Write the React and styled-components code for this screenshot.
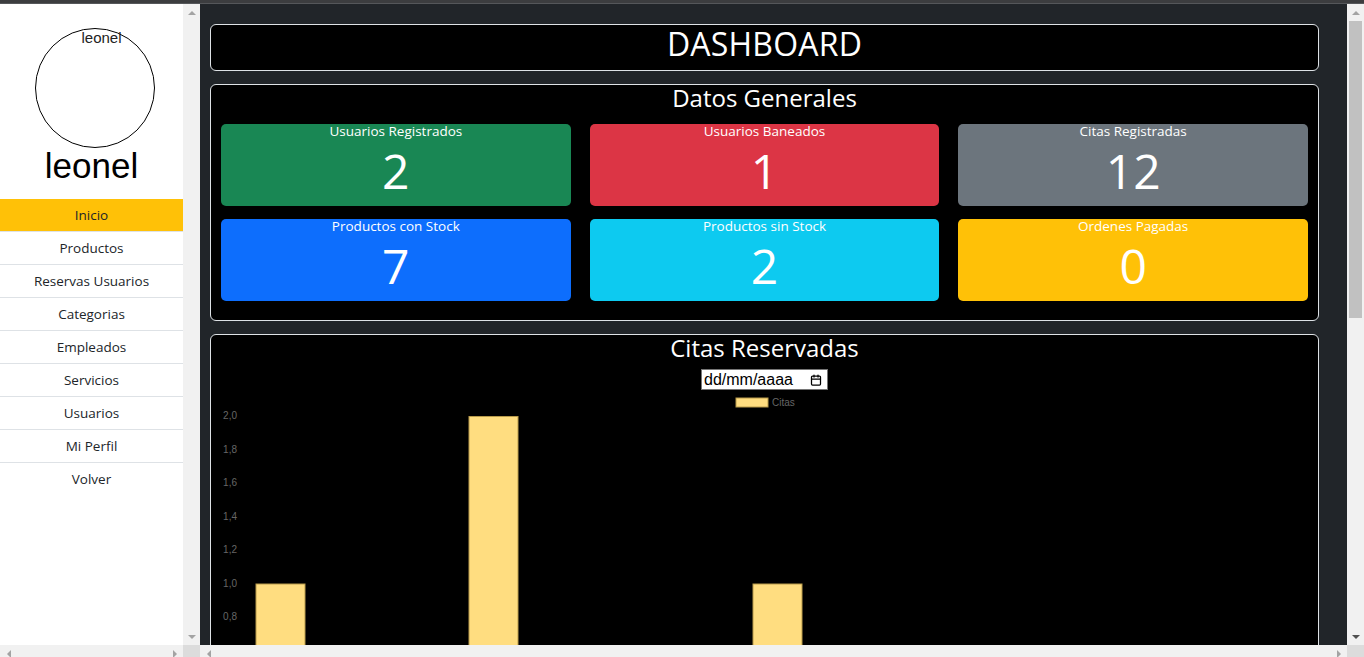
import React from 'react';
import styled, { createGlobalStyle } from 'styled-components';
import { Calendar } from 'lucide-react';

const GlobalStyle = createGlobalStyle`
  * { box-sizing: border-box; }
  html, body { margin: 0; padding: 0; height: 100%; overflow: hidden; }
  body {
    font-family: "Open Sans", "Noto Sans", sans-serif;
    background: #212529;
    color: #212529;
  }
`;

/* ---------- scrollbars (drawn, the page itself does not scroll) ---------- */

const VBar = styled.div`
  width: 17px;
  flex-shrink: 0;
  display: flex;
  flex-direction: column;
  background: #f1f1f1;
`;

const HBar = styled.div`
  flex: 1;
  height: 17px;
  display: flex;
  background: #f1f1f1;
`;

const Track = styled.div`
  flex: 1;
  display: flex;
  flex-direction: column;
`;

const Thumb = styled.div`
  height: ${(p) => p.$size}px;
  margin: 0 2px;
  background: #c1c1c1;
`;

const Corner = styled.div`
  width: 17px;
  height: 17px;
  flex-shrink: 0;
  background: #dcdcdc;
`;

const triangles = {
  up: (c) => `border-width: 0 4px 4px 4px; border-color: transparent transparent ${c} transparent;`,
  down: (c) => `border-width: 4px 4px 0 4px; border-color: ${c} transparent transparent transparent;`,
  left: (c) => `border-width: 4px 4px 4px 0; border-color: transparent ${c} transparent transparent;`,
  right: (c) => `border-width: 4px 0 4px 4px; border-color: transparent transparent transparent ${c};`,
};

const ArrowBtn = styled.div`
  width: 17px;
  height: 17px;
  flex-shrink: 0;
  display: flex;
  align-items: center;
  justify-content: center;
  &::before {
    content: '';
    width: 0;
    height: 0;
    border-style: solid;
    ${(p) => triangles[p.$dir](p.$on ? '#505050' : '#a3a3a3')}
  }
`;

const VScroll = ({ thumb, downOn }) => (
  <VBar>
    <ArrowBtn $dir="up" />
    <Track>{thumb ? <Thumb $size={thumb} /> : null}</Track>
    <ArrowBtn $dir="down" $on={downOn} />
  </VBar>
);

const HScroll = () => (
  <>
    <HBar>
      <ArrowBtn $dir="left" />
      <Track />
      <ArrowBtn $dir="right" />
    </HBar>
    <Corner />
  </>
);

/* ---------- layout ---------- */

const TopStrip = styled.div`
  height: 4px;
  background: #3c3d3f;
  border-bottom: 1px solid #55575a;
`;

const Layout = styled.div`
  display: flex;
  height: 658px;
`;

const Pane = styled.div`
  display: flex;
  flex-direction: column;
  width: ${(p) => p.$w || 'auto'};
  flex: ${(p) => (p.$w ? '0 0 auto' : '1')};
  min-width: 0;
`;

const PaneBody = styled.div`
  flex: 1;
  display: flex;
  min-height: 0;
`;

const PaneFoot = styled.div`
  display: flex;
  height: 17px;
`;

const Sidebar = styled.aside`
  flex: 1;
  background: #fff;
  overflow: hidden;
`;

const Profile = styled.div`
  padding-top: 24px;
`;

const Avatar = styled.div`
  width: 120px;
  height: 120px;
  margin-left: 35px;
  border: 1px solid #000;
  border-radius: 50%;
  padding-left: 13px;
  text-align: center;
  font-family: "Liberation Sans", Arial, sans-serif;
  font-size: 15px;
  line-height: 17px;
  color: #222;
`;

const UserName = styled.h1`
  margin: 0 0 15px;
  text-align: center;
  font-family: "Liberation Sans", Arial, sans-serif;
  font-weight: 400;
  font-size: 35px;
  line-height: 36px;
  color: #000;
`;

const Nav = styled.nav`
  display: flex;
  flex-direction: column;
`;

const NavItem = styled.a`
  display: block;
  height: 33px;
  line-height: 32px;
  text-align: center;
  font-size: 13.5px;
  color: #212529;
  text-decoration: none;
  border-bottom: 1px solid #dee2e6;
  background: ${(p) => (p.$active ? '#ffc107' : '#fff')};
  &:last-child { border-bottom: none; }
`;

const Main = styled.main`
  flex: 1;
  min-width: 0;
  overflow: hidden;
  background: #212529;
  padding: 20px 28px 0 10px;
`;

const Panel = styled.section`
  background: #000;
  border: 1px solid #dee2e6;
  border-radius: 6px;
  color: #fff;
  margin-bottom: 13px;
  padding: ${(p) => p.$pad || '0'};
  min-height: ${(p) => p.$minH || 'auto'};
`;

const PageTitle = styled.h1`
  margin: 0 0 8px;
  text-align: center;
  font-weight: 400;
  font-size: 32px;
  line-height: 37px;
  letter-spacing: 0.2px;
`;

const PanelTitle = styled.h2`
  margin: 0;
  text-align: center;
  font-weight: 400;
  font-size: 24px;
  line-height: 26px;
`;

const CardGrid = styled.div`
  display: grid;
  grid-template-columns: repeat(3, 1fr);
  column-gap: 19px;
  row-gap: 13px;
  padding: 13px 10px 0;
`;

const Card = styled.div`
  height: 82px;
  border-radius: 5px;
  background: ${(p) => p.$bg};
  color: #fff;
  text-align: center;
`;

const CardLabel = styled.div`
  font-size: 13.5px;
  font-weight: 500;
  line-height: 15px;
`;

const CardValue = styled.div`
  margin-top: 3px;
  font-size: 48px;
  font-weight: 400;
  line-height: 57px;
`;

const DateRow = styled.div`
  display: flex;
  justify-content: center;
  margin-top: 8px;
`;

const DateInput = styled.div`
  width: 127px;
  height: 21px;
  display: flex;
  align-items: center;
  justify-content: space-between;
  padding: 0 5px 0 2px;
  background: #fff;
  border: 1px solid #767676;
  color: #000;
  font-family: "Liberation Sans", Arial, sans-serif;
  font-size: 16px;
  line-height: 19px;
`;

const ChartSvg = styled.svg`
  display: block;
  margin-top: 2px;
  width: 100%;
  height: 420px;
  font-family: "Liberation Sans", Arial, sans-serif;
`;

const stats = [
  { label: 'Usuarios Registrados', value: 2, bg: '#198754' },
  { label: 'Usuarios Baneados', value: 1, bg: '#dc3545' },
  { label: 'Citas Registradas', value: 12, bg: '#6c757d' },
  { label: 'Productos con Stock', value: 7, bg: '#0d6efd' },
  { label: 'Productos sin Stock', value: 2, bg: '#0dcaf0' },
  { label: 'Ordenes Pagadas', value: 0, bg: '#ffc107' },
];

const menu = ['Inicio', 'Productos', 'Reservas Usuarios', 'Categorias', 'Empleados', 'Servicios', 'Usuarios', 'Mi Perfil', 'Volver'];

const citas = [1, 0, 0, 2, 0, 0, 0, 1, 0, 0, 0, 0, 0, 0, 0];
const Y0 = 359.5;
const PER_UNIT = 167.5;
const X0 = 34;
const CAT = 71;
const BAR = 49;

const CitasChart = () => {
  const ticks = [];
  for (let i = 10; i >= 0; i--) ticks.push(i / 5);
  return (
    <ChartSvg viewBox="0 0 1107 420" preserveAspectRatio="xMinYMin meet">
      <rect x="525" y="6" width="32" height="9" fill="#ffdd80" stroke="#b89a4a" strokeWidth="1" />
      <text x="561" y="14" fontSize="10" fill="#666">Citas</text>
      {ticks.map((t) => (
        <text key={t} x="26" y={Y0 - t * PER_UNIT + 2.5} fontSize="10" fill="#666" textAnchor="end">
          {t.toFixed(1).replace('.', ',')}
        </text>
      ))}
      {citas.map((v, i) =>
        v > 0 ? (
          <rect
            key={i}
            x={X0 + i * CAT + (CAT - BAR) / 2}
            y={Y0 - v * PER_UNIT}
            width={BAR}
            height={v * PER_UNIT}
            fill="#ffdd80"
            stroke="#b89a4a"
            strokeWidth="1"
          />
        ) : null
      )}
      {citas.map((_, i) => (
        <text key={'l' + i} x={X0 + i * CAT + CAT / 2} y={Y0 + 16} fontSize="10" fill="#666" textAnchor="middle">
          {`2023-05-${String(i + 10).padStart(2, '0')}`}
        </text>
      ))}
    </ChartSvg>
  );
};

export default function App() {
  return (
    <>
      <GlobalStyle />
      <TopStrip />
      <Layout>
        <Pane $w="200px">
          <PaneBody>
            <Sidebar>
              <Profile>
                <Avatar>leonel</Avatar>
                <UserName>leonel</UserName>
              </Profile>
              <Nav>
                {menu.map((m, i) => (
                  <NavItem key={m} href="#" $active={i === 0}>{m}</NavItem>
                ))}
              </Nav>
            </Sidebar>
            <VScroll />
          </PaneBody>
          <PaneFoot>
            <HScroll />
          </PaneFoot>
        </Pane>
        <Pane>
          <PaneBody>
            <Main>
              <Panel>
                <PageTitle>DASHBOARD</PageTitle>
              </Panel>
              <Panel $pad="0 0 19px">
                <PanelTitle>Datos Generales</PanelTitle>
                <CardGrid>
                  {stats.map((s) => (
                    <Card key={s.label} $bg={s.bg}>
                      <CardLabel>{s.label}</CardLabel>
                      <CardValue>{s.value}</CardValue>
                    </Card>
                  ))}
                </CardGrid>
              </Panel>
              <Panel $minH="960px">
                <PanelTitle>Citas Reservadas</PanelTitle>
                <DateRow>
                  <DateInput>
                    <span>dd/mm/aaaa</span>
                    <Calendar size={12} strokeWidth={2.5} color="#000" />
                  </DateInput>
                </DateRow>
                <CitasChart />
              </Panel>
            </Main>
            <VScroll thumb={297} downOn />
          </PaneBody>
          <PaneFoot>
            <HScroll />
          </PaneFoot>
        </Pane>
      </Layout>
    </>
  );
}
